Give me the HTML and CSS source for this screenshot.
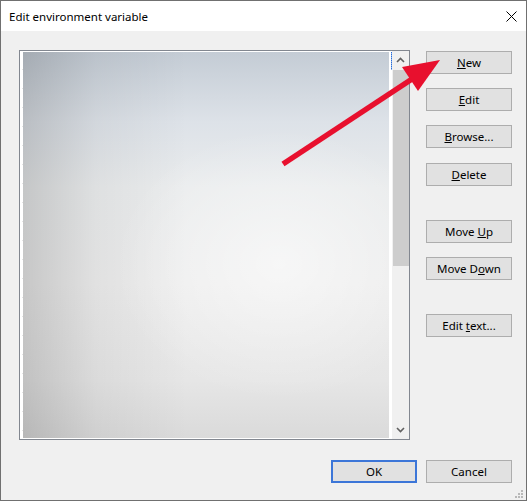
FILE: index.html
```html
<!DOCTYPE html>
<html lang="en">
<head>
    <meta charset="UTF-8">
    <meta name="viewport" content="width=device-width, initial-scale=1.0">
    <title>Edit environment variable</title>
    <link rel="stylesheet" href="styles.css">
</head>
<body>
    <div class="window">
        <div class="titlebar">
            <span class="title">Edit environment variable</span>
            <svg class="close" width="11" height="11" viewBox="0 0 11 11">
                <path d="M0.5 0.5 L10.5 10.5 M10.5 0.5 L0.5 10.5" stroke="#000" stroke-width="1" fill="none"/>
            </svg>
        </div>

        <div class="content">
            <div class="main">
                <div class="listbox">
                    <div class="list-area">
                        <div class="list-image"></div>
                        <div class="focus-line"></div>
                    </div>
                    <div class="scrollbar">
                        <svg class="arrow" width="9" height="6" viewBox="0 0 9 6">
                            <path d="M1 5 L4.5 1.5 L8 5" stroke="#606060" stroke-width="1.6" fill="none"/>
                        </svg>
                        <div class="track"><div class="thumb"></div></div>
                        <svg class="arrow" width="9" height="6" viewBox="0 0 9 6">
                            <path d="M1 1 L4.5 4.5 L8 1" stroke="#606060" stroke-width="1.6" fill="none"/>
                        </svg>
                    </div>
                </div>

                <div class="buttons">
                    <button class="btn"><u>N</u>ew</button>
                    <button class="btn gap-s"><u>E</u>dit</button>
                    <button class="btn gap-s"><u>B</u>rowse...</button>
                    <button class="btn gap-m"><u>D</u>elete</button>
                    <button class="btn gap-l">Move <u>U</u>p</button>
                    <button class="btn gap-s">Move D<u>o</u>wn</button>
                    <button class="btn gap-l">Edit <u>t</u>ext...</button>
                </div>
            </div>

            <div class="footer">
                <button class="btn default">OK</button>
                <button class="btn">Cancel</button>
            </div>
        </div>

        <svg class="grip" width="9" height="9" viewBox="0 0 9 9">
            <rect x="6" y="0" width="2" height="2" fill="#b8b8b8"/>
            <rect x="3" y="3" width="2" height="2" fill="#b8b8b8"/>
            <rect x="6" y="3" width="2" height="2" fill="#b8b8b8"/>
            <rect x="0" y="6" width="2" height="2" fill="#b8b8b8"/>
            <rect x="3" y="6" width="2" height="2" fill="#b8b8b8"/>
            <rect x="6" y="6" width="2" height="2" fill="#b8b8b8"/>
        </svg>

        <!-- annotation arrow over the dialog -->
        <svg class="pointer" width="527" height="501" viewBox="0 0 527 501">
            <line x1="283" y1="164" x2="412" y2="79" stroke="#e8102e" stroke-width="5.5"/>
            <polygon points="440,60 418,91 402,67" fill="#e8102e"/>
        </svg>
    </div>
</body>
</html>
```

FILE: styles.css
```css
body {
    margin: 0;
    font-family: "Segoe UI", "Noto Sans", "Liberation Sans", sans-serif;
    font-size: 11px;
    color: #000;
}
.window {
    position: relative;
    width: 527px;
    height: 501px;
    box-sizing: border-box;
    border: 1px solid #707070;
    background-color: #f0f0f0;
    display: flex;
    flex-direction: column;
}
.titlebar {
    height: 30px;
    background-color: #fff;
    display: flex;
    align-items: center;
    justify-content: space-between;
    padding: 0 9px 0 8px;
}
.title {
    font-size: 11.5px;
    color: #000;
}
.content {
    padding: 19px 14px 0 18px;
}
.main {
    display: flex;
    height: 390px;
}
.listbox {
    width: 391px;
    box-sizing: border-box;
    border: 1px solid #828790;
    background-color: #fff;
    display: flex;
}
.list-area {
    flex: 1;
    display: flex;
    padding: 1px 0 1px 3px;
    background-image: repeating-linear-gradient(to bottom, transparent 0, transparent 18px, #e4e4e4 18px, #e4e4e4 19px);
    background-size: 3px 100%;
    background-repeat: no-repeat;
    background-position: 2px 0;
}
.list-image {
    flex: 1;
    background:
        radial-gradient(ellipse 45% 35% at 70% 55%, rgba(255, 255, 255, 0.55), rgba(255, 255, 255, 0) 100%),
        linear-gradient(to right, rgba(0, 0, 0, 0.16) 0%, rgba(0, 0, 0, 0.05) 20%, rgba(0, 0, 0, 0) 45%),
        linear-gradient(to bottom, #c4ccd5 0%, #dde2e8 18%, #eaeced 35%, #ededed 60%, #e6e6e6 85%, #dadada 100%);
}
.focus-line {
    width: 1px;
    margin-left: 2px;
    align-self: flex-start;
    height: 18px;
    background-image: repeating-linear-gradient(to bottom, #2a6fd6 0, #2a6fd6 1px, #8fb4ee 1px, #8fb4ee 2px);
}
.scrollbar {
    width: 17px;
    background-color: #f0f0f0;
    display: flex;
    flex-direction: column;
    align-items: center;
}
.arrow {
    margin: 6px 0;
    flex: none;
}
.track {
    flex: 1;
    width: 100%;
}
.thumb {
    height: 196px;
    margin-top: 1px;
    margin-left: 1px;
    background-color: #cdcdcd;
}
.buttons {
    display: flex;
    flex-direction: column;
    margin-left: 16px;
    padding-top: 1px;
}
.btn {
    width: 86px;
    height: 23px;
    box-sizing: border-box;
    background-color: #e1e1e1;
    border: 1px solid #adadad;
    font-family: inherit;
    font-size: 11.5px;
    color: #000;
    padding: 0;
    cursor: pointer;
}
.btn u {
    text-underline-offset: 1px;
}
.gap-s {
    margin-top: 14px;
}
.gap-m {
    margin-top: 15px;
}
.gap-l {
    margin-top: 34px;
}
.footer {
    display: flex;
    justify-content: flex-end;
    gap: 9px;
    margin-top: 20px;
}
.default {
    border: 2px solid #3c76d8;
}
.grip {
    position: absolute;
    right: 2px;
    bottom: 1px;
}
.pointer {
    position: absolute;
    left: -1px;
    top: -1px;
    pointer-events: none;
}
```
